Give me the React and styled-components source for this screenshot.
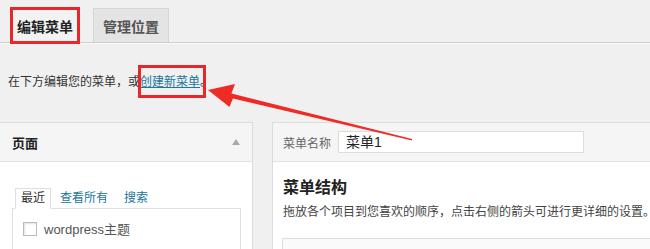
import React from "react";
import styled, { createGlobalStyle } from "styled-components";

const Global = createGlobalStyle`
  html, body {
    margin: 0;
    padding: 0;
    background: #f0f0f0;
    overflow: hidden;
  }
  body {
    font-family: "Liberation Sans", "Noto Sans CJK SC", sans-serif;
    color: #333;
  }
`;

const Page = styled.div`
  position: relative;
  width: 650px;
  height: 249px;
  overflow: hidden;
`;

const NavBar = styled.div`
  display: flex;
  align-items: flex-end;
  gap: 13px;
  height: 43px;
  padding-left: 10px;
  box-sizing: border-box;
  border-bottom: 1px solid #cfcfcf;
  box-shadow: 0 1px 0 #f8f8f8;
`;

const NavTab = styled.div`
  display: flex;
  align-items: center;
  justify-content: center;
  box-sizing: border-box;
  font-size: 14px;
  font-weight: bold;
  ${(p) =>
    p.$active
      ? `
    width: 70px;
    height: 37px;
    margin-bottom: -2px;
    border: 3px solid #e8262b;
    background: #f2f2f2;
    color: #222;
    padding-top: 1px;
  `
      : `
    width: 76px;
    height: 34px;
    border: 1px solid #d6d6d6;
    border-bottom: none;
    background: #e4e4e4;
    color: #555;
  `}
`;

const Intro = styled.p`
  margin: 0;
  padding: 32px 0 0 8px;
  height: 79px;
  box-sizing: border-box;
  font-size: 12px;
  line-height: 14px;
  color: #333;
`;

const Marked = styled.span`
  position: relative;

  &::after {
    content: "";
    position: absolute;
    left: -2px;
    right: -6px;
    top: -10px;
    bottom: -9px;
    border: 3px solid #e8262b;
    box-sizing: border-box;
  }
`;

const Link = styled.a`
  color: #21759b;
  text-decoration: underline;
`;

const Columns = styled.div`
  display: grid;
  grid-template-columns: 254px 1fr;
  gap: 19px;
  margin-left: -1px;
  width: 653px;
`;

const Panel = styled.div`
  border: 1px solid #dcdcdc;
  border-bottom: none;
  background: #fff;
  height: 140px;
`;

const PanelHead = styled.div`
  display: flex;
  align-items: center;
  height: 38px;
  padding: 0 12px;
  background: #f5f5f5;
  border-bottom: 1px solid #e2e2e2;
  gap: 7px;
`;

const PanelTitle = styled.h3`
  margin: 0;
  flex: 1;
  font-size: 13px;
  font-weight: bold;
  color: #222;
`;

const Toggle = styled.span`
  width: 0;
  height: 0;
  border-left: 4px solid transparent;
  border-right: 4px solid transparent;
  border-bottom: 6px solid #aaa;
`;

const PanelBody = styled.div`
  padding: 26px 11px 0 12px;
`;

const Tabs = styled.div`
  display: flex;
  align-items: flex-end;
  padding-left: 3px;
  height: 20px;
`;

const Tab = styled.span`
  font-size: 12px;
  line-height: 19px;
  padding: 0 ${(p) => (p.$active ? "5px" : "8px")};
  color: ${(p) => (p.$active ? "#333" : "#21759b")};
  ${(p) =>
    p.$active &&
    `
    border: 1px solid #dfdfdf;
    border-bottom: 1px solid #fff;
    margin-bottom: -1px;
    margin-right: 1px;
    background: #fff;
  `}
`;

const TabPanel = styled.div`
  border: 1px solid #dfdfdf;
  border-bottom: none;
  height: 60px;
  padding: 10px 10px 0;
`;

const CheckRow = styled.label`
  display: flex;
  align-items: center;
  gap: 7px;
  font-size: 13px;
  color: #555;
`;

const Box = styled.span`
  width: 12px;
  height: 12px;
  border: 1px solid #bbb;
  background: #fff;
  box-shadow: inset 1px 1px 2px rgba(0, 0, 0, 0.12);
`;

const NameRow = styled(PanelHead)`
  padding: 0 10px;
  gap: 7px;
`;

const Label = styled.span`
  font-size: 12px;
  color: #666;
`;

const NameInput = styled.div`
  width: 246px;
  height: 22px;
  box-sizing: border-box;
  border: 1px solid #dddddd;
  background: #fff;
  font-size: 14px;
  line-height: 20px;
  padding-left: 7px;
  color: #222;
`;

const Structure = styled.div`
  padding: 16px 0 0 10px;
`;

const Heading = styled.h3`
  margin: 0;
  font-size: 16px;
  font-weight: bold;
  color: #222;
  line-height: 20px;
`;

const Desc = styled.p`
  margin: 7px 0 0;
  font-size: 12px;
  line-height: 14px;
  color: #444;
  white-space: nowrap;
`;

const MenuBox = styled.div`
  margin-top: 19px;
  margin-left: -1px;
  height: 20px;
  border: 1px solid #dedede;
  border-right: none;
  background: #fafafa;
`;

const Arrow = styled.svg`
  position: absolute;
  left: 0;
  top: 0;
  pointer-events: none;
`;

export default function App() {
  return (
    <Page>
      <Global />
      <NavBar>
        <NavTab $active>编辑菜单</NavTab>
        <NavTab>管理位置</NavTab>
      </NavBar>
      <Intro>
        在下方编辑您的菜单，或
        <Marked>
          <Link href="#">创建新菜单</Link>
        </Marked>
        。
      </Intro>
      <Columns>
        <Panel>
          <PanelHead>
            <PanelTitle>页面</PanelTitle>
            <Toggle />
          </PanelHead>
          <PanelBody>
            <Tabs>
              <Tab $active>最近</Tab>
              <Tab>查看所有</Tab>
              <Tab>搜索</Tab>
            </Tabs>
            <TabPanel>
              <CheckRow>
                <Box />
                wordpress主题
              </CheckRow>
            </TabPanel>
          </PanelBody>
        </Panel>
        <Panel>
          <NameRow>
            <Label>菜单名称</Label>
            <NameInput>菜单1</NameInput>
          </NameRow>
          <Structure>
            <Heading>菜单结构</Heading>
            <Desc>拖放各个项目到您喜欢的顺序，点击右侧的箭头可进行更详细的设置。</Desc>
            <MenuBox />
          </Structure>
        </Panel>
      </Columns>
      <Arrow width="650" height="249" viewBox="0 0 650 249">
        <polygon
          points="208,90 235,84 231.4,93.4 412,139 412,140.5 232.9,98.4 229.5,107"
          fill="#ee2b24"
        />
      </Arrow>
    </Page>
  );
}
